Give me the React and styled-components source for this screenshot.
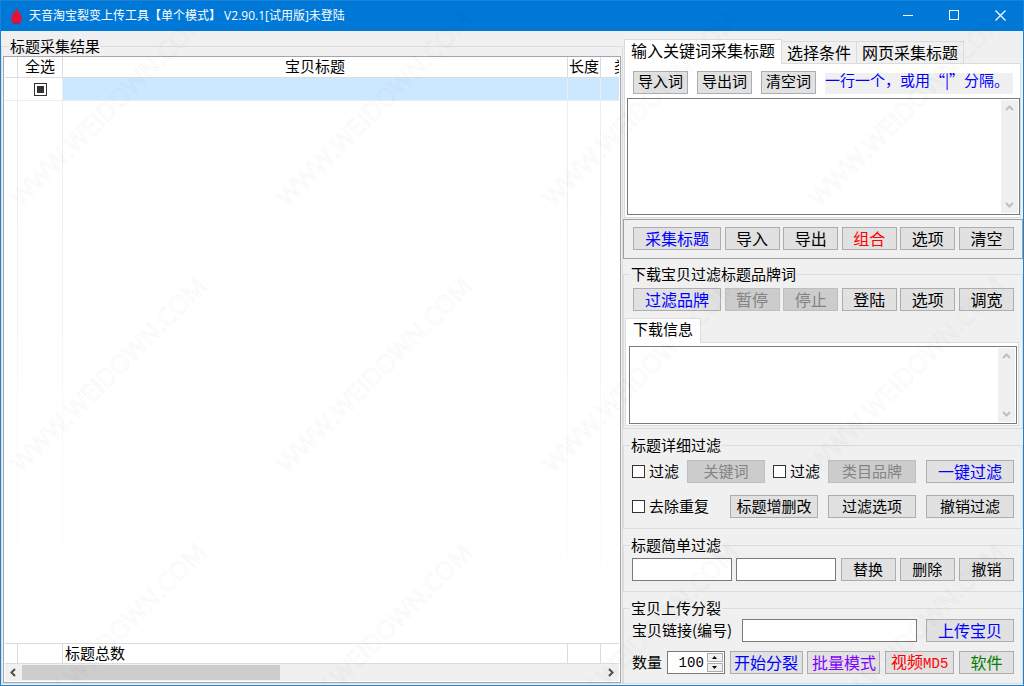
import React, { useEffect, useRef } from "react";
import styled, { createGlobalStyle, css } from "styled-components";

const GlobalStyle = createGlobalStyle`
  *, *::before, *::after { box-sizing: border-box; }
  html, body { margin: 0; padding: 0; }
  body, button, input, textarea {
    font-family: "Noto Sans CJK SC", "Liberation Sans", sans-serif;
    font-size: 15px;
    line-height: 18px;
    color: #000;
  }
`;

const Window = styled.div`
  position: relative;
  display: flex;
  flex-direction: column;
  min-height: 100vh;
  background: #f0f0f0;
  border: 1px solid #1883d7;
`;

const TitleBar = styled.header`
  display: flex;
  align-items: center;
  height: 30px;
  padding: 0 0 1px 9px;
  background: #0078d7;
  color: #fff;
`;

const AppTitle = styled.h1`
  flex: 1;
  margin: 0 0 0 6px;
  font-family: "Open Sans", "Noto Sans CJK SC", sans-serif;
  font-size: 12px;
  line-height: 16px;
  font-weight: 400;
  white-space: nowrap;
`;

const WindowButton = styled.button`
  display: flex;
  align-items: center;
  justify-content: center;
  width: 46px;
  height: 29px;
  padding: 0;
  border: 0;
  background: transparent;
`;

const Content = styled.main`
  flex: 1;
  display: grid;
  grid-template-columns: minmax(0, 622fr) minmax(400px, 400fr);
  padding-bottom: 1px;
`;

const Group = styled.fieldset`
  min-width: 0;
  margin: ${(p) => p.$top || 0}px 0 0;
  padding: ${(p) => p.$pad || "0"};
  border: 1px solid #dcdcdc;
`;

const Legend = styled.legend`
  height: 20px;
  margin-left: 6px;
  padding: 1px 1px 0;
  white-space: nowrap;
`;

const ResultGroup = styled(Group)`
  display: flex;
  flex-direction: column;
`;

const ListFrame = styled.div`
  flex: 1;
  display: flex;
  flex-direction: column;
  padding: 0 1px 1px;
  border: 1px solid #a5a5ad;
  background: #fff;
`;

const TableArea = styled.div`
  flex: 1;
  display: grid;
`;

const Table = styled.table`
  width: 100%;
  height: 100%;
  table-layout: fixed;
  border-collapse: separate;
  border-spacing: 0;
`;

const HeadCell = styled.th`
  height: 21px;
  padding: 0 0 2px ${(p) => p.$indent || 0}px;
  border-right: 1px solid #dcdcdc;
  border-bottom: 1px solid #dcdcdc;
  font-weight: 400;
  text-align: ${(p) => (p.$indent ? "left" : "center")};
  white-space: nowrap;
  &:last-child {
    overflow: hidden;
    border-right: 0;
  }
`;

const Cell = styled.td`
  height: 23px;
  padding: 0;
  border-right: 1px solid #ececec;
  border-bottom: 1px solid #ececec;
  background: ${(p) => (p.$selected ? "#cce8ff" : "#fff")};
  text-align: center;
  line-height: 0;
  &:last-child { border-right: 0; }
`;

const FillCell = styled.td`
  padding: 0;
  background: linear-gradient(#ededed, #fff) right / 1px 100% no-repeat;
  &:last-child { background: none; }
`;

const FootCell = styled.td`
  height: 21px;
  padding: 0 2px 2px;
  border: solid #dcdcdc;
  border-width: 1px 1px 1px 0;
  line-height: 17px;
  &:last-child { border-right: 0; }
`;

const HScroll = styled.div`
  display: flex;
  height: 17px;
  background: #f0f0f0;
`;

const HTrack = styled.div`
  flex: 1;
  padding: 1px 0;
`;

const HThumb = styled.div`
  width: 44.5%;
  height: 15px;
  background: #cdcdcd;
`;

const ScrollArrow = styled.button`
  display: flex;
  align-items: center;
  justify-content: center;
  width: 17px;
  height: 17px;
  padding: 0;
  border: 0;
  background: transparent;
`;

const Side = styled.div`
  display: flex;
  flex-direction: column;
  padding-top: 8px;
`;

const Tabs = styled.div`
  display: flex;
  align-items: flex-end;
  height: 24px;
  padding-left: 1px;
`;

const Tab = styled.button`
  height: ${(p) => (p.$active ? 25 : 22)}px;
  margin-bottom: ${(p) => (p.$active ? -1 : 0)}px;
  padding: 0 ${(p) => (p.$small ? 7 : p.$active ? 6 : 5)}px ${(p) => (p.$active ? 4 : 2)}px;
  z-index: ${(p) => (p.$active ? 1 : 0)};
  border: 1px solid #dcdcdc;
  border-bottom: 0;
  border-left-width: ${(p) => (p.$active ? 1 : 0)}px;
  background: ${(p) => (p.$active ? "#fff" : "#f0f0f0")};
  font-size: ${(p) => (p.$small ? 15 : 16)}px;
  white-space: nowrap;
`;

const TabPage = styled.div`
  display: flex;
  flex-direction: column;
  margin: 0 ${(p) => p.$right}px 0 1px;
  padding: ${(p) => p.$pad};
  border: 1px solid #dcdcdc;
  background: #fff;
`;

const Toolbar = styled.div`
  display: flex;
  align-items: center;
  justify-content: space-between;
  padding: ${(p) => p.$pad || "0 8px"};
`;

const WordTools = styled(Toolbar)`
  justify-content: flex-start;
  gap: 9px;
`;

const Hint = styled.span`
  flex: 1;
  height: 21px;
  margin-top: 3px;
  line-height: 14px;
  background: #f0f0f0;
  color: #00f;
  white-space: nowrap;
`;

const tones = { blue: "#0000ff", red: "#ff0000", purple: "#8000ff", green: "#008000" };
const widths = { s: 55, m: 73, l: 78, xl: 88, md: 69 };

const Button = styled.button`
  flex: none;
  width: ${(p) => widths[p.$w || "s"]}px;
  height: 23px;
  padding: 0 0 2px;
  border: 1px solid #adadad;
  background: #e1e1e1;
  color: ${(p) => tones[p.$tone] || "#000"};
  font-size: ${(p) => (p.$big ? 16 : 15)}px;
  white-space: nowrap;
  ${(p) =>
    p.disabled &&
    css`
      border-color: #bfbfbf;
      background: #cccccc;
      color: #838383;
    `}
`;

const Latin = styled.span`
  font-family: "Liberation Mono", monospace;
  font-size: 14px;
`;

const TextFrame = styled.div`
  display: flex;
  height: ${(p) => p.$h}px;
  padding: 1px;
  border: 1px solid #7a7a7a;
  background: #fff;
`;

const TextArea = styled.textarea`
  flex: 1;
  min-width: 0;
  padding: 2px;
  border: 0;
  outline: 0;
  resize: none;
  overflow: hidden;
  background: transparent;
`;

const VScroll = styled.div`
  display: flex;
  flex-direction: column;
  justify-content: space-between;
  width: 17px;
  background: #f0f0f0;
`;

const ActionBox = styled.div`
  margin-top: 1px;
  border: 1px solid #a0a0a0;
`;

const CheckLabel = styled.label`
  display: flex;
  align-items: center;
  gap: 4px;
  white-space: nowrap;
`;

const CheckText = styled.span`
  padding-bottom: 2px;
`;

const CheckBox = styled.input.attrs({ type: "checkbox" })`
  appearance: none;
  width: 13px;
  height: 13px;
  margin: 0;
  border: 1px solid #333;
  background: #fff;
  &:checked, &:indeterminate {
    background: #333;
    box-shadow: inset 0 0 0 2px #fff;
  }
`;

const FilterGrid = styled.div`
  display: grid;
  grid-template-columns: minmax(0, 1fr) 88px 88px;
  gap: 12px 10px;
  padding: 5px 8px 10px;
`;

const FilterCell = styled.div`
  display: flex;
  align-items: center;
  justify-content: ${(p) => (p.$packed ? "flex-start" : "space-between")};
  gap: ${(p) => (p.$packed ? 8 : 0)}px;
`;

const TextInput = styled.input.attrs({ type: "text" })`
  width: ${(p) => p.$w}px;
  height: 23px;
  padding: 0 4px;
  border: 1px solid #7a7a7a;
  outline: 0;
  background: #fff;
`;

const LinkInput = styled(TextInput)`
  margin-right: 9px;
`;

const FieldLabel = styled.label`
  flex: ${(p) => (p.$grow ? 1 : "none")};
  padding-bottom: 2px;
  white-space: nowrap;
`;

const Spinner = styled.div`
  display: flex;
  width: 58px;
  height: 23px;
  padding: 1px;
  border: 1px solid #7a7a7a;
  background: #fff;
`;

const NumberInput = styled.input.attrs({ type: "number" })`
  flex: 1;
  min-width: 0;
  padding: 0 3px 0 0;
  border: 0;
  outline: 0;
  appearance: textfield;
  font-family: "Liberation Mono", monospace;
  text-align: right;
  font-size: 14px;
  &::-webkit-inner-spin-button { appearance: none; margin: 0; }
`;

const SpinButtons = styled.div`
  display: flex;
  flex-direction: column;
  justify-content: space-between;
  width: 16px;
`;

const SpinButton = styled.button`
  display: flex;
  align-items: center;
  justify-content: center;
  height: 9px;
  padding: 0;
  border: 1px solid #adadad;
  background: #f0f0f0;
`;

const MarkClip = styled.div`
  position: absolute;
  inset: 0;
  overflow: hidden;
  pointer-events: none;
  z-index: 2;
`;

const MarkGrid = styled.div`
  display: grid;
  grid-template-columns: repeat(4, 266px);
  grid-auto-rows: 266px;
  place-items: center;
  margin: -26px 0 0 -26px;
`;

const Mark = styled.span`
  font-family: "Open Sans", sans-serif;
  font-size: 25px;
  line-height: 30px;
  color: transparent;
  -webkit-text-stroke: 1px rgba(0, 0, 0, 0.05);
  transform: rotate(-45deg);
  user-select: none;
  white-space: nowrap;
`;

function Flame() {
  return (
    <svg width="13" height="18" viewBox="0 0 13 18" aria-hidden="true">
      <path
        d="M6.2 1C7.6 2.4 8.6 4 8.6 6.2L9.6 4.6C10.4 6 10.4 7.4 10.2 8.6L11.4 7.8C12.4 10 12.2 13 10.6 15H2.4C1 13.4 .8 10.4 1.6 8.2L2.6 9C2.2 7.4 2.6 6 3.4 4.8L4.2 6.2C4.4 4.2 6.2 3 6.2 1Z"
        fill="#e0133c"
      />
      <path d="M2.2 15H10.8L9.6 17H3.4Z" fill="#a3205c" />
    </svg>
  );
}

const arrows = {
  up: "M1 6L4.5 2.5L8 6",
  down: "M1 3L4.5 6.5L8 3",
  left: "M6 1L2.5 4.5L6 8",
  right: "M3 1L6.5 4.5L3 8",
};

function Arrow({ dir, color = "#bfbfbf" }) {
  return (
    <svg width="9" height="9" viewBox="0 0 9 9" aria-hidden="true">
      <path d={arrows[dir]} fill="none" stroke={color} strokeWidth="2" />
    </svg>
  );
}

function ScrolledText({ label, height }) {
  return (
    <TextFrame $h={height}>
      <TextArea aria-label={label} />
      <VScroll>
        <ScrollArrow aria-label="向上滚动"><Arrow dir="up" /></ScrollArrow>
        <ScrollArrow aria-label="向下滚动"><Arrow dir="down" /></ScrollArrow>
      </VScroll>
    </TextFrame>
  );
}

function CheckField({ children }) {
  return (
    <CheckLabel>
      <CheckBox />
      <CheckText>{children}</CheckText>
    </CheckLabel>
  );
}

function SelectAll() {
  const ref = useRef(null);
  useEffect(() => {
    ref.current.indeterminate = true;
  }, []);
  return <CheckBox ref={ref} aria-label="全选" />;
}

function ResultList() {
  return (
    <ResultGroup $top={5} $pad="0 1px 0 1px">
      <Legend>标题采集结果</Legend>
      <ListFrame>
        <TableArea>
          <Table>
            <colgroup>
              <col width="13" />
              <col width="45" />
              <col />
              <col width="33" />
              <col width="18" />
            </colgroup>
            <thead>
              <tr>
                <HeadCell />
                <HeadCell>全选</HeadCell>
                <HeadCell>宝贝标题</HeadCell>
                <HeadCell>长度</HeadCell>
                <HeadCell $indent={13}>类</HeadCell>
              </tr>
            </thead>
            <tbody>
              <tr>
                <Cell />
                <Cell><SelectAll /></Cell>
                <Cell $selected />
                <Cell $selected />
                <Cell $selected />
              </tr>
              <tr>
                <FillCell /><FillCell /><FillCell /><FillCell /><FillCell />
              </tr>
            </tbody>
            <tfoot>
              <tr>
                <FootCell />
                <FootCell />
                <FootCell>标题总数</FootCell>
                <FootCell />
                <FootCell />
              </tr>
            </tfoot>
          </Table>
        </TableArea>
        <HScroll>
          <ScrollArrow aria-label="向左滚动"><Arrow dir="left" color="#505050" /></ScrollArrow>
          <HTrack><HThumb /></HTrack>
          <ScrollArrow aria-label="向右滚动"><Arrow dir="right" color="#505050" /></ScrollArrow>
        </HScroll>
      </ListFrame>
    </ResultGroup>
  );
}

export default function App() {
  return (
    <>
      <GlobalStyle />
      <Window lang="zh-CN">
        <TitleBar>
          <Flame />
          <AppTitle>天音淘宝裂变上传工具【单个模式】 V2.90.1[试用版]未登陆</AppTitle>
          <WindowButton aria-label="最小化">
            <svg width="11" height="11"><path d="M0 5.5H10" stroke="#fff" /></svg>
          </WindowButton>
          <WindowButton aria-label="最大化">
            <svg width="11" height="11"><rect x=".5" y=".5" width="9" height="9" fill="none" stroke="#fff" /></svg>
          </WindowButton>
          <WindowButton aria-label="关闭">
            <svg width="11" height="11"><path d="M.5 .5L10.5 10.5M10.5 .5L.5 10.5" stroke="#fff" strokeWidth="1.2" /></svg>
          </WindowButton>
        </TitleBar>

        <Content>
          <ResultList />

          <Side>
            <Tabs role="tablist">
              <Tab role="tab" aria-selected="true" $active>输入关键词采集标题</Tab>
              <Tab role="tab" aria-selected="false">选择条件</Tab>
              <Tab role="tab" aria-selected="false">网页采集标题</Tab>
            </Tabs>
            <TabPage $right={2} $pad="6px 0 2px 2px">
              <WordTools $pad="0 7px 4px 6px">
                <Button>导入词</Button>
                <Button>导出词</Button>
                <Button>清空词</Button>
                <Hint>一行一个，或用“|”分隔。</Hint>
              </WordTools>
              <ScrolledText label="关键词" height={117} />
            </TabPage>

            <ActionBox>
              <Toolbar $pad="7px 8px 8px 9px">
                <Button $w="xl" $tone="blue" $big>采集标题</Button>
                <Button $big>导入</Button>
                <Button $big>导出</Button>
                <Button $tone="red" $big>组合</Button>
                <Button $big>选项</Button>
                <Button $big>清空</Button>
              </Toolbar>
            </ActionBox>

            <Group $top={5} $pad="0 0 2px">
              <Legend>下载宝贝过滤标题品牌词</Legend>
              <Toolbar $pad="4px 8px 7px 9px">
                <Button $w="xl" $tone="blue" $big>过滤品牌</Button>
                <Button $big disabled>暂停</Button>
                <Button $big disabled>停止</Button>
                <Button $big>登陆</Button>
                <Button $big>选项</Button>
                <Button $big>调宽</Button>
              </Toolbar>
              <Tabs role="tablist">
                <Tab role="tab" aria-selected="true" $active $small>下载信息</Tab>
              </Tabs>
              <TabPage $right={3} $pad="3px 1px 1px 3px">
                <ScrolledText label="下载信息" height={78} />
              </TabPage>
            </Group>

            <Group $top={6}>
              <Legend>标题详细过滤</Legend>
              <FilterGrid>
                <FilterCell $packed>
                  <CheckField>过滤</CheckField>
                  <Button $w="l" disabled>关键词</Button>
                  <CheckField>过滤</CheckField>
                </FilterCell>
                <Button $w="xl" disabled>类目品牌</Button>
                <Button $w="xl" $tone="blue" $big>一键过滤</Button>
                <FilterCell>
                  <CheckField>去除重复</CheckField>
                  <Button $w="xl">标题增删改</Button>
                </FilterCell>
                <Button $w="xl">过滤选项</Button>
                <Button $w="xl">撤销过滤</Button>
              </FilterGrid>
            </Group>

            <Group $top={6}>
              <Legend>标题简单过滤</Legend>
              <Toolbar $pad="3px 8px 10px">
                <TextInput $w={100} aria-label="查找内容" />
                <TextInput $w={100} aria-label="替换内容" />
                <Button>替换</Button>
                <Button>删除</Button>
                <Button>撤销</Button>
              </Toolbar>
            </Group>

            <Group $top={6}>
              <Legend>宝贝上传分裂</Legend>
              <Toolbar $pad="1px 8px 9px">
                <FieldLabel $grow htmlFor="item-link">宝贝链接(编号)</FieldLabel>
                <LinkInput id="item-link" $w={175} />
                <Button $w="xl" $tone="blue" $big>上传宝贝</Button>
              </Toolbar>
              <Toolbar $pad="0 8px 9px">
                <FieldLabel htmlFor="count">数量</FieldLabel>
                <Spinner>
                  <NumberInput id="count" defaultValue={100} />
                  <SpinButtons>
                    <SpinButton aria-label="增加">
                      <svg width="5" height="3"><path d="M2.5 0L5 3H0Z" /></svg>
                    </SpinButton>
                    <SpinButton aria-label="减少">
                      <svg width="5" height="3"><path d="M0 0H5L2.5 3Z" /></svg>
                    </SpinButton>
                  </SpinButtons>
                </Spinner>
                <Button $w="m" $tone="blue" $big>开始分裂</Button>
                <Button $w="m" $tone="purple" $big>批量模式</Button>
                <Button $w="md" $tone="red" $big>视频<Latin>MD5</Latin></Button>
                <Button $tone="green" $big>软件</Button>
              </Toolbar>
            </Group>
          </Side>
        </Content>

        <MarkClip aria-hidden="true">
          <MarkGrid>
            {Array.from({ length: 12 }, (_, i) => (
              <Mark key={i}>WWW.WEIDOWN.COM</Mark>
            ))}
          </MarkGrid>
        </MarkClip>
      </Window>
    </>
  );
}
